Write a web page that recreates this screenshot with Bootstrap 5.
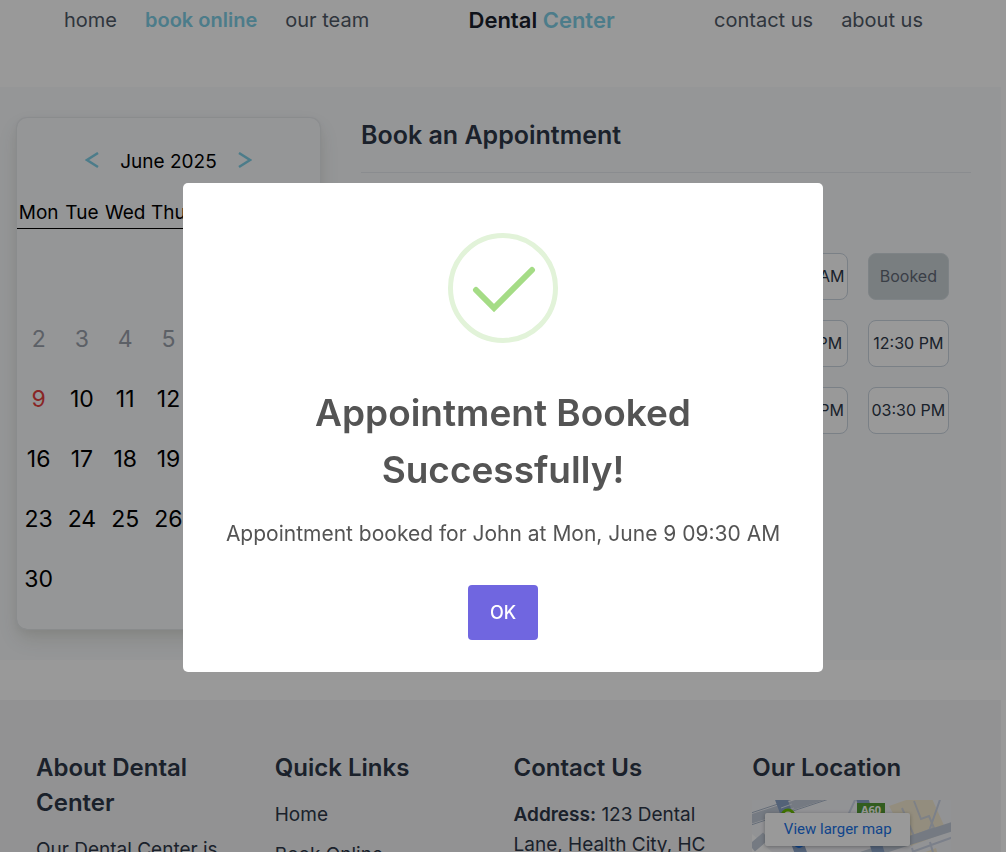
<!DOCTYPE html>
<html lang="en">
<head>
<meta charset="utf-8">
<meta name="viewport" content="width=device-width, initial-scale=1">
<title>Dental Center - Book Online</title>
<link href="https://cdn.jsdelivr.net/npm/bootstrap@5.3.0/dist/css/bootstrap.min.css" rel="stylesheet">
<style>
  body {
    font-family: Inter, "Liberation Sans", sans-serif;
    font-size: 19px;
    line-height: 30px;
    color: #2d3748;
    background: #fff;
    height: 100vh;
    padding-right: 5px;
  }
  .site-nav { height: 87px; padding: 0 78px 0 64px; }
  .site-nav a { color: #4f5966; font-size: 20px; line-height: 40px; text-decoration: none; white-space: nowrap; }
  .site-nav .brand-name { color: #1a202c; font-weight: 600; font-size: 22px; }
  .site-nav .here, .site-nav .brand-name span { color: #7fcfe6; font-weight: 600; }
  .nav-group { gap: 28px; }

  .booking { background: #f8fafc; padding: 31px 30px 31px 17px; gap: 41px; }
  .calendar { flex: 0 0 303px; border-radius: 10px; color: #000; padding: 28px 0 20px;
    box-shadow: 0 0 1px 1px #e6e9ec, 0 10px 20px rgba(60, 60, 0, .12), 0 3px 10px rgba(0, 0, 0, .05); }
  .calendar-head { gap: 21px; height: 32px; }
  .calendar-head button { border: 0; background: none; padding: 0; line-height: 0; color: #7fcfe6; }
  .days { width: 100%; table-layout: fixed; text-align: center; margin-top: 20px; }
  .days th { font-weight: 400; height: 30px; padding: 0; border-bottom: 1px solid #000; }
  .days td { height: 60px; padding: 0; font-size: 23px; }
  .days tbody::before { content: ""; display: block; height: 20px; }
  .days .past { color: #9aa0ab; }
  .days .today { color: #e53e3e; }

  .book-title { font-size: 25px; line-height: 35px; font-weight: 600; padding-bottom: 19px; border-bottom: 1px solid #e7eaee; }
  .slots { display: grid; grid-template-columns: repeat(6, 1fr); gap: 20px; margin: 80px 22px 0 0; }
  .slot { height: 47px; padding: 0 0 2px; border: 1px solid #cbd5e0; border-radius: 8px; background: #fff;
    color: #2d3748; font-size: 16px; white-space: nowrap; }
  .slot:disabled { background: #cad3d6; color: #626976; border-color: #d3dadf; }

  .site-footer { background: #f3f3f5; margin-top: 40px; padding: 50px 50px 50px 36px; }
  .footer-cols { display: grid; grid-template-columns: repeat(4, 1fr); gap: 40px; }
  .footer-cols h2 { font-size: 24px; line-height: 35px; font-weight: 600; margin-bottom: 15px; }
  .footer-cols a { color: inherit; text-decoration: none; }
  .footer-cols li { margin-bottom: 10px; }
  .map-box { height: 200px; background: #f4f5f9; }
  .map-box svg { width: 100%; height: 100%; }
  .map-box .map-link { top: 13px; left: 13px; width: 145px; background: #fff;
    color: #1a73e8; font: 15px/33px Roboto, sans-serif; border-radius: 2px; box-shadow: 0 1px 4px rgba(0, 0, 0, .3); }

  .veil { background: rgba(0, 0, 0, .4); }
  .notice { max-width: 640px; padding-top: 3px; }
  .notice .modal-content { border: 0; border-radius: 5px; color: #545454; text-align: center; padding: 50px 20px 32px; }
  .notice h1 { font-size: 37px; line-height: 57px; font-weight: 600; margin: 41px 60px 21px; }
  .notice p { font-size: 21px; line-height: 30px; margin-bottom: 36px; }
  .notice .btn { width: 70px; height: 55px; background: #7066e0; color: #fff; font-size: 18px; font-weight: 500; border-radius: 4px; }
</style>
</head>
<body class="modal-open overflow-hidden">

<nav class="site-nav d-flex justify-content-between align-items-start" aria-label="Main">
  <div class="nav-group d-flex">
    <a href="#">home</a>
    <a href="#" class="here" aria-current="page">book online</a>
    <a href="#">our team</a>
  </div>
  <a href="#" class="brand-name">Dental <span>Center</span></a>
  <div class="nav-group d-flex">
    <a href="#">contact us</a>
    <a href="#">about us</a>
  </div>
</nav>

<main class="booking d-flex align-items-start">
  <section class="calendar">
    <div class="calendar-head d-flex justify-content-center align-items-center">
      <button type="button" aria-label="Previous month"><svg width="14" height="20" viewBox="0 0 14 20" fill="none" stroke="currentColor" stroke-width="2.500"><path d="M13 1L2 8l11 7"/></svg></button>
      <span>June 2025</span>
      <button type="button" aria-label="Next month"><svg width="14" height="20" viewBox="0 0 14 20" fill="none" stroke="currentColor" stroke-width="2.500"><path d="M1 1L12 8 1 15"/></svg></button>
    </div>
    <table class="days">
      <thead><tr><th>Mon</th><th>Tue</th><th>Wed</th><th>Thu</th><th>Fri</th><th>Sat</th><th>Sun</th></tr></thead>
      <tbody>
        <tr><td></td><td></td><td></td><td></td><td></td><td></td><td class="past">1</td></tr>
        <tr class="past"><td>2</td><td>3</td><td>4</td><td>5</td><td>6</td><td>7</td><td>8</td></tr>
        <tr><td class="today">9</td><td>10</td><td>11</td><td>12</td><td>13</td><td>14</td><td>15</td></tr>
        <tr><td>16</td><td>17</td><td>18</td><td>19</td><td>20</td><td>21</td><td>22</td></tr>
        <tr><td>23</td><td>24</td><td>25</td><td>26</td><td>27</td><td>28</td><td>29</td></tr>
        <tr><td>30</td><td></td><td></td><td></td><td></td><td></td><td></td></tr>
      </tbody>
    </table>
  </section>

  <section class="flex-grow-1">
    <h1 class="book-title m-0">Book an Appointment</h1>
    <div class="slots">
      <button type="button" class="slot">07:00 AM</button>
      <button type="button" class="slot">07:30 AM</button>
      <button type="button" class="slot">08:00 AM</button>
      <button type="button" class="slot">08:30 AM</button>
      <button type="button" class="slot">09:00 AM</button>
      <button type="button" class="slot" disabled>Booked</button>
      <button type="button" class="slot">10:00 AM</button>
      <button type="button" class="slot">10:30 AM</button>
      <button type="button" class="slot">11:00 AM</button>
      <button type="button" class="slot">11:30 AM</button>
      <button type="button" class="slot">12:00 PM</button>
      <button type="button" class="slot">12:30 PM</button>
      <button type="button" class="slot">01:00 PM</button>
      <button type="button" class="slot">01:30 PM</button>
      <button type="button" class="slot">02:00 PM</button>
      <button type="button" class="slot">02:30 PM</button>
      <button type="button" class="slot">03:00 PM</button>
      <button type="button" class="slot">03:30 PM</button>
    </div>
  </section>
</main>

<footer class="site-footer">
  <div class="footer-cols">
    <div>
      <h2>About Dental Center</h2>
      <p>Our Dental Center is</p>
    </div>
    <div>
      <h2>Quick Links</h2>
      <ul class="list-unstyled">
        <li><a href="#">Home</a></li>
        <li><a href="#">Book Online</a></li>
      </ul>
    </div>
    <div>
      <h2>Contact Us</h2>
      <p><strong class="fw-semibold">Address:</strong> 123 Dental Lane, Health City, HC</p>
    </div>
    <div>
      <h2>Our Location</h2>
      <div class="map-box position-relative overflow-hidden">
        <svg viewBox="0 0 199 200" preserveAspectRatio="xMinYMin slice" aria-hidden="true">
          <path d="M137 6l40-14 18 40-36 14zM142 64l42-16 8 30-46 14z" fill="#f6ecd2"/>
          <path d="M0 34l20 18-20 22z" fill="#fff"/>
          <path d="M92 24l12-26M176 34L190-6M160 52l44-16M168 78l-8-30M186 70l-8-28" fill="none" stroke="#cdd5e6" stroke-width="2"/>
          <path d="M150 8l12 28 20-8-5-12-8 3-7-18" fill="none" stroke="#d3d7df" stroke-width="2"/>
          <path d="M-4 20L76-6M110 56l92-30M0 48l14-12" fill="none" stroke="#c3ccd9" stroke-width="9"/>
          <path d="M-4 14L50-4M-4 26L80-2" fill="none" stroke="#aab7ca" stroke-width="1"/>
          <path d="M28-4l22 60M110-2l18 60" fill="none" stroke="#8ba4c9" stroke-width="12"/>
          <path d="M29 8l11-4M31 12l11-4" stroke="#dfe6f2" stroke-width="1"/>
          <circle cx="36" cy="16" r="6" fill="#fff" stroke="#6cc000" stroke-width="3"/>
          <circle cx="47" cy="43" r="5" fill="#1a73e8"/>
          <rect x="105" y="3" width="28" height="16" fill="#549c35"/>
          <text x="119" y="14" text-anchor="middle" fill="#fff" font-family="Open Sans, sans-serif" font-weight="700" font-size="11">A60</text>
        </svg>
        <a href="#" class="map-link position-absolute text-center">View larger map</a>
      </div>
    </div>
  </div>
</footer>

<div class="modal d-block veil" tabindex="-1" role="dialog" aria-modal="true" aria-labelledby="notice-title">
  <div class="modal-dialog modal-dialog-centered notice">
    <div class="modal-content">
      <svg class="mx-auto" width="110" height="110" viewBox="0 0 110 110" fill="none" aria-hidden="true">
        <circle cx="55" cy="55" r="52.500" stroke="#e2f3d9" stroke-width="5"/>
        <path d="M28 57l18 18 38-38" stroke="#a5dc86" stroke-width="6" stroke-linecap="round"/>
      </svg>
      <h1 id="notice-title">Appointment Booked Successfully!</h1>
      <p>Appointment booked for John at Mon, June 9 09:30 AM</p>
      <div><button type="button" class="btn">OK</button></div>
    </div>
  </div>
</div>

<script src="https://cdn.jsdelivr.net/npm/bootstrap@5.3.0/dist/js/bootstrap.bundle.min.js"></script>
</body>
</html>
